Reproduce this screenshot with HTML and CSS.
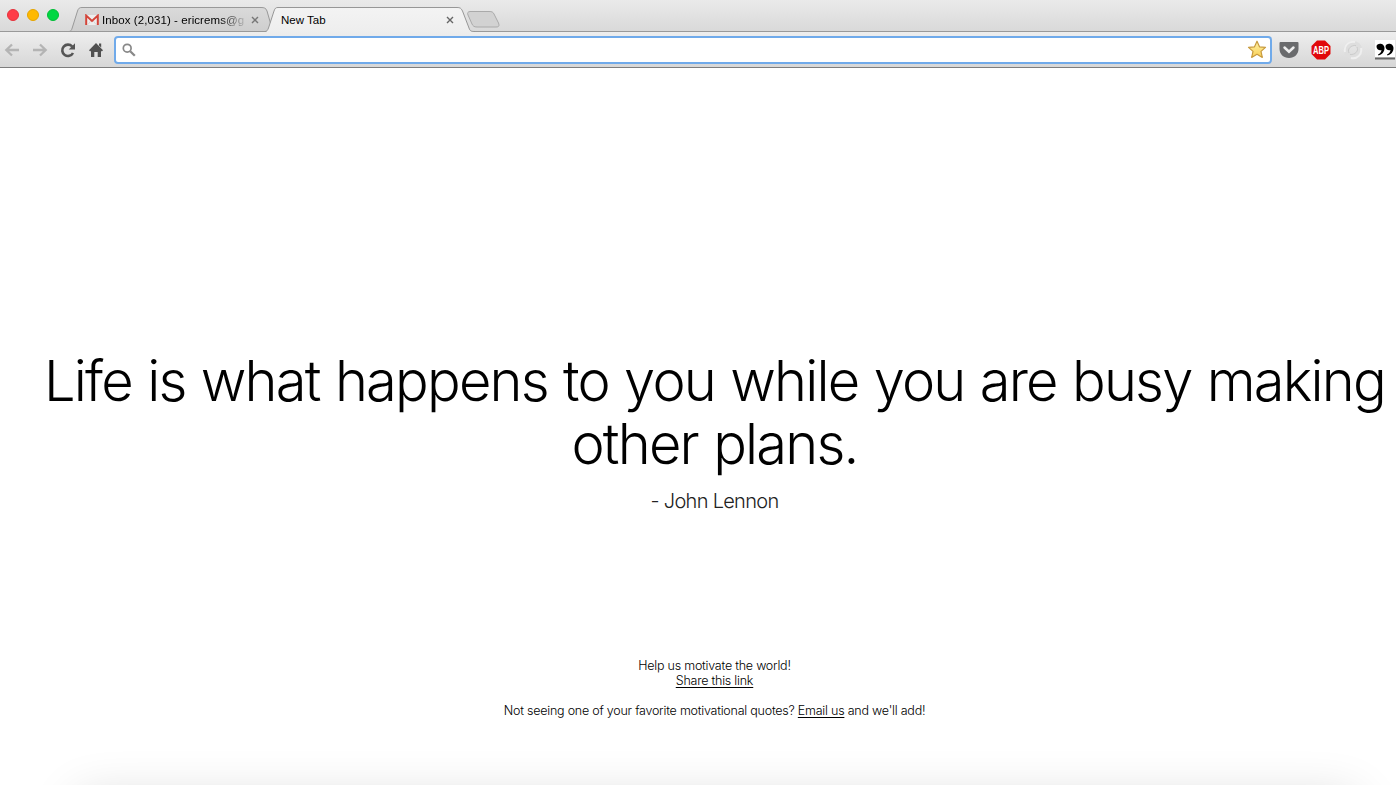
FILE: index.html
```html
<!DOCTYPE html>
<html lang="en">
<head>
    <meta charset="UTF-8">
    <meta name="viewport" content="width=device-width, initial-scale=1.0">
    <title>New Tab</title>
    <link rel="stylesheet" href="styles.css">
</head>
<body>
    <header class="tabstrip">
        <div class="lights">
            <span class="light red"></span>
            <span class="light yellow"></span>
            <span class="light green"></span>
        </div>
        <div class="tab tab-inbox">
            <svg class="tab-shape" width="206" height="25" viewBox="0 0 206 25">
                <defs><linearGradient id="inactive" x2="0" y2="1"><stop offset="0" stop-color="#dadada"/><stop offset="1" stop-color="#cecece"/></linearGradient></defs>
                <path d="M0 24.5C2 24.5 2.5 23 3.2 21L8.5 4C9.5 1.2 10.5.5 13 .5H192C195 .5 197 1 198 4L202 18C203 21 202 24.5 197 24.5Z" fill="url(#inactive)" stroke="#999"/>
            </svg>
            <svg class="gmail" width="14" height="12" viewBox="0 0 14 12">
                <path d="M1 1H13V11H1Z" fill="#eee"/>
                <path d="M3 10.5L6 6.5M11 10.5L8 6.5" stroke="#ccc" stroke-width=".7"/>
                <path d="M1.2 11V1.6L7 7L12.8 1.6V11" fill="none" stroke="#d4453a" stroke-width="2"/>
            </svg>
            <span class="tab-title faded">Inbox (2,031) - ericrems@g</span>
            <svg class="close" width="8" height="8" viewBox="0 0 8 8"><path d="M1 1L7 7M7 1L1 7" stroke="#777" stroke-width="1.4"/></svg>
        </div>
        <div class="tab tab-new">
            <svg class="tab-shape" width="211" height="25" viewBox="0 0 211 25">
                <defs><linearGradient id="active" x2="0" y2="1"><stop offset="0" stop-color="#f3f3f3"/><stop offset="1" stop-color="#eeeeee"/></linearGradient></defs>
                <path d="M0 25C2 24.5 2.7 23 3.5 21L9 4C10 1 11 .5 13 .5H192C195 .5 196 1 197.500 4L204 21C205 24 206 24.5 210 25Z" fill="url(#active)"/>
                <path d="M0 24.500C2 24.5 2.7 23 3.5 21L9 4C10 1 11 .5 13 .5H192C195 .5 196 1 197.500 4L204 21C205 24 206 24.5 210 24.5" fill="none" stroke="#979797"/>
            </svg>
            <span class="tab-title">New Tab</span>
            <svg class="close" width="8" height="8" viewBox="0 0 8 8"><path d="M1 1L7 7M7 1L1 7" stroke="#666" stroke-width="1.4"/></svg>
        </div>
        <svg class="add-tab" width="33" height="17" viewBox="0 0 33 17">
            <path d="M3 .5H22C25 .5 26 1 27 3L31.500 12C32.500 15 32 16 29 16H10C7 16 6 15 5 13L1 4C0 2 1 .5 3 .5Z" fill="#d2d2d2" stroke="#aaa"/>
        </svg>
    </header>

    <nav class="toolbar">
        <div class="nav-buttons">
            <svg width="16" height="14" viewBox="0 0 16 14"><path d="M15 7H2M8 1.500L2.300 7L8 12.500" fill="none" stroke="#b4b4b4" stroke-width="2.300"/></svg>
            <svg width="16" height="14" viewBox="0 0 16 14"><path d="M1 7H14M8 1.500L13.700 7L8 12.500" fill="none" stroke="#b4b4b4" stroke-width="2.300"/></svg>
            <svg width="16" height="16" viewBox="0 0 16 16"><path d="M13 11A5.700 5.700 0 1 1 12.200 4.500" fill="none" stroke="#555" stroke-width="2.600"/><path d="M15 1.200V7.500H8.700Z" fill="#555"/></svg>
            <svg width="16" height="16" viewBox="0 0 16 16"><path d="M8 1L15 8.300L13.800 9.500L13 8.700V15H9.700V10H6.300V15H3V8.700L2.200 9.500L1 8.300ZM11 1.500H13.200V5.500L11 3.500Z" fill="#505050"/></svg>
        </div>
        <div class="omnibox">
            <svg width="14" height="14" viewBox="0 0 14 14"><circle cx="5.200" cy="5.200" r="3.900" fill="none" stroke="#888" stroke-width="1.700"/><path d="M8.200 8.200L12.800 12.800" stroke="#888" stroke-width="2.300"/></svg>
            <svg width="20" height="19" viewBox="0 0 20 19">
                <defs><linearGradient id="gold" x2="0" y2="1"><stop offset="0" stop-color="#fff2a8"/><stop offset="1" stop-color="#f8cf55"/></linearGradient></defs>
                <path d="M10 1.200L12.500 6.800L18.500 7.400L14 11.400L15.300 17.400L10 14.300L4.700 17.400L6 11.400L1.500 7.400L7.500 6.800Z" fill="url(#gold)" stroke="#c79a3e" stroke-width="1.200" stroke-linejoin="round"/>
            </svg>
        </div>
        <div class="extensions">
            <svg width="20" height="18" viewBox="0 0 20 18"><path d="M1.500 1H18.500Q19.500 1 19.500 2V8C19.500 13 15.500 17 10 17S.5 13 .5 8V2Q.5 1 1.500 1Z" fill="#6a6b6d"/><path d="M5.500 6.500L10 10.700L14.500 6.500" fill="none" stroke="#eee" stroke-width="2.500" stroke-linecap="round"/></svg>
            <svg width="20" height="20" viewBox="0 0 20 20"><path d="M6 .5H14L19.500 6V14L14 19.500H6L.5 14V6Z" fill="#e1080b"/><text class="abp" x="10" y="13.600" text-anchor="middle" textLength="16" lengthAdjust="spacingAndGlyphs">ABP</text></svg>
            <svg width="20" height="20" viewBox="0 0 20 20"><circle cx="10" cy="10" r="6.800" fill="none" stroke="#dedede" stroke-width="5"/><path d="M2 12A8.200 8.200 0 0 1 12 2M18 8A8.200 8.200 0 0 1 8 18" fill="none" stroke="#efefef" stroke-width="2"/><path d="M6 13C4 9 8 5 13 5.500M14 7C16 11 12 15 7 14.500" fill="none" stroke="#cbcbcb"/></svg>
            <svg width="20" height="20" viewBox="0 0 20 20"><path d="M0 0H20V17H0Z" fill="#fff"/><path d="M0 18.500H20" stroke="#666" stroke-width="2"/><path d="M1.500 6.500C1.500 2.500 9.500 2.500 9.500 8C9.500 12 7 14.500 3.500 15.500L3 14.500C5 13.500 6.300 12 6.500 10C4 10.700 1.500 9.200 1.500 6.500ZM10.500 6.500C10.500 2.500 18.500 2.500 18.500 8C18.500 12 16 14.500 12.500 15.500L12 14.500C14 13.500 15.300 12 15.500 10C13 10.700 10.500 9.200 10.500 6.500Z"/></svg>
        </div>
    </nav>

    <main class="page">
        <h1 class="quote">Life is what happens to you while you are busy making<br>other plans.</h1>
        <p class="author">- John Lennon</p>
        <footer class="links">
            <p>Help us motivate the world!<br><a href="#">Share this link</a></p>
            <p>Not seeing one of your favorite motivational quotes? <a href="#">Email us</a> and we'll add!</p>
        </footer>
        <div class="bottom-shadow"></div>
    </main>
</body>
</html>
```

FILE: styles.css
```css
html {
    overflow: hidden;
}
body {
    margin: 0;
    height: 785px;
    display: flex;
    flex-direction: column;
    overflow: hidden;
    background: #fff;
    color: #000;
    font-family: Inter, "Liberation Sans", Arial, sans-serif;
}
svg {
    display: block;
    flex: none;
}
.tabstrip {
    display: flex;
    align-items: flex-end;
    height: 31px;
    border-bottom: 1px solid #999;
    background: linear-gradient(#eaeaea, #d9d9d9);
}
.lights {
    display: flex;
    gap: 8px;
    align-self: flex-start;
    width: 64px;
    padding: 9px 0 0 7px;
}
.light {
    box-sizing: border-box;
    width: 12px;
    height: 12px;
    border-radius: 50%;
}
.red {
    background: #ff3b47;
    border: 1px solid #e5323c;
}
.yellow {
    background: #ffb900;
    border: 1px solid #e5a400;
}
.green {
    background: #00d742;
    border: 1px solid #00bd36;
}
.tab {
    position: relative;
    box-sizing: border-box;
    display: flex;
    align-items: center;
    height: 25px;
    margin-bottom: -1px;
}
.tab > * {
    position: relative;
}
.tab .tab-shape {
    position: absolute;
    left: 0;
    top: 0;
}
.tab-inbox {
    width: 194px;
    padding-left: 14px;
}
.tab-inbox .tab-shape {
    left: -2px;
}
.tab-new {
    width: 202px;
    padding-left: 16px;
}
.tab-title {
    font-family: "Liberation Sans", Arial, sans-serif;
    font-size: 11.5px;
    line-height: 14px;
    white-space: nowrap;
    width: 165px;
}
.gmail {
    margin-right: 3px;
}
.faded {
    width: 142px;
    margin-right: 7px;
    letter-spacing: 0.08px;
    mask-image: linear-gradient(to right, #000 118px, transparent 146px);
}
.add-tab {
    margin-bottom: 3px;
}
.toolbar {
    box-sizing: border-box;
    display: flex;
    align-items: center;
    height: 36px;
    flex: none;
    padding-left: 4px;
    border-bottom: 1px solid #7d7d7d;
    background: linear-gradient(#eeeeee, #d7d7d7);
}
.nav-buttons {
    display: flex;
    align-items: center;
    gap: 12px;
    width: 110px;
}
.omnibox {
    box-sizing: border-box;
    display: flex;
    align-items: center;
    justify-content: space-between;
    width: 1158px;
    height: 28px;
    flex: none;
    padding: 0 3px 0 6px;
    border: 2px solid #70aaea;
    border-radius: 4px;
    background: #fff;
}
.extensions {
    display: flex;
    align-items: center;
    gap: 12px;
    padding-left: 7px;
}
.abp {
    font: bold 10px "Liberation Sans", Arial, sans-serif;
    fill: #fff;
}
.page {
    position: relative;
    flex: 1;
    width: 1429px;
    overflow: hidden;
    text-align: center;
    font-weight: 300;
}
.quote {
    margin: 0;
    padding-top: 282px;
    font-size: 56px;
    font-weight: 300;
    line-height: 63px;
    letter-spacing: -1.8px;
    word-spacing: 1.3px;
    white-space: nowrap;
}
.author {
    margin: 13px 0 0;
    font-size: 20px;
    line-height: 24px;
    letter-spacing: -0.7px;
    color: #222;
}
.links {
    padding-top: 145px;
    font-size: 12.5px;
    line-height: 15px;
    letter-spacing: -0.23px;
}
.links p {
    margin: 0 0 15px;
}
.links a {
    color: #000;
    text-underline-offset: 2px;
}
.bottom-shadow {
    position: absolute;
    left: 78px;
    top: 730px;
    width: 1278px;
    height: 80px;
    box-shadow: 0 0 50px rgba(0, 0, 0, 0.16);
}
```
